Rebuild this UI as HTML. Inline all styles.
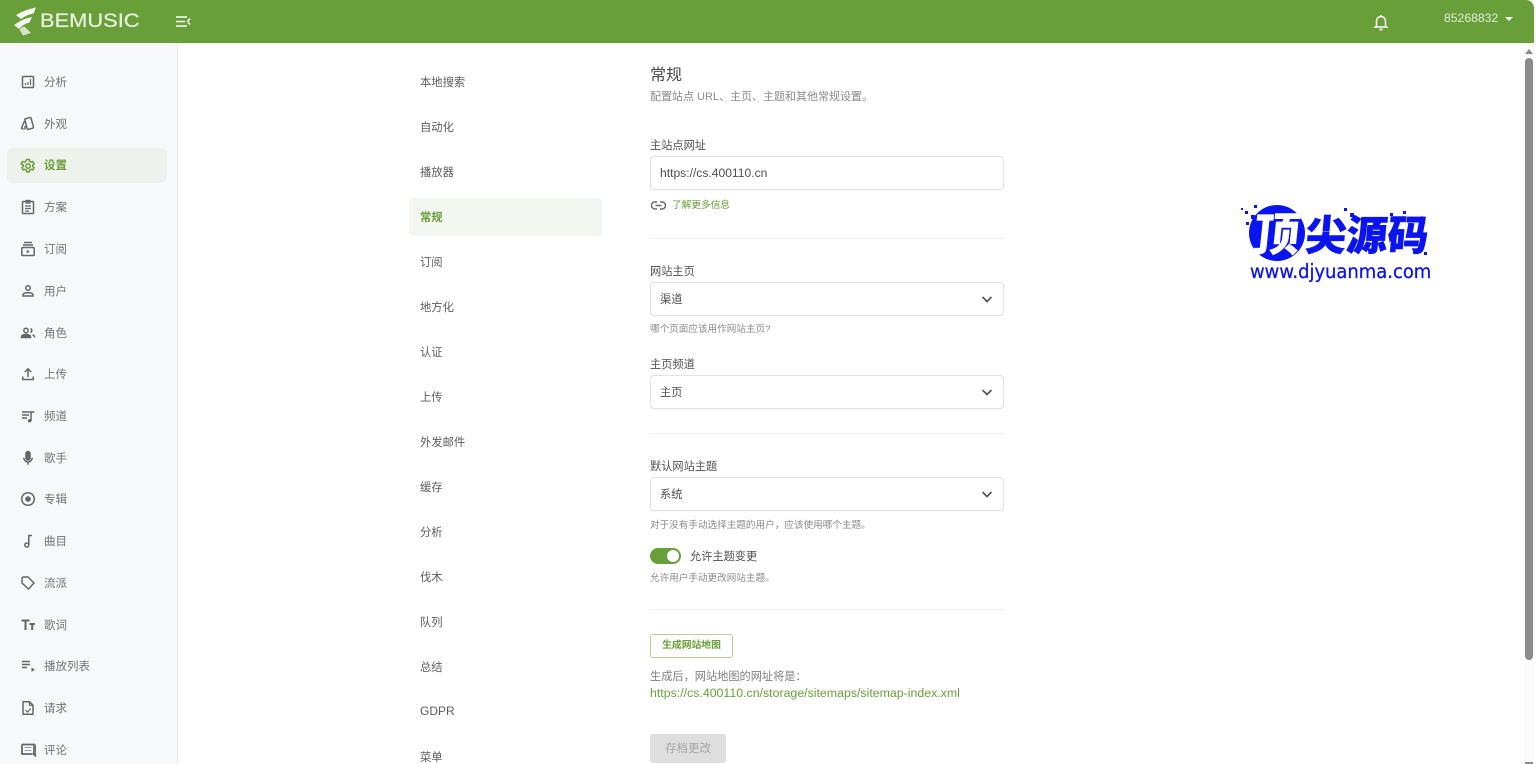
<!DOCTYPE html>
<html lang="zh-CN">
<head>
<meta charset="utf-8">
<title>常规设置</title>
<style>
html,body{margin:0;padding:0;width:1536px;height:764px;overflow:hidden;background:#fff;}
body{position:relative;font-family:"Liberation Sans","Noto Sans CJK SC",sans-serif;font-size:11.2px;color:#5f5f5f;filter:blur(.3px);}
.a{position:absolute;white-space:nowrap;}
#hd{position:absolute;left:0;top:0;width:1534px;height:43px;background:#689f38;border-top-right-radius:8px;}
#sb{position:absolute;left:0;top:43px;width:177px;height:721px;background:#f6f8fa;border-right:1px solid #e9ebed;}
.si{position:absolute;left:44px;line-height:16px;height:16px;color:#737373;font-size:11.5px;}
.ic{position:absolute;left:20px;width:16px;height:16px;fill:none;stroke:#666;stroke-width:1.5;}
.ni{position:absolute;left:420px;line-height:16px;height:16px;color:#5c5c5c;font-size:11.3px;}
.inp{position:absolute;left:650px;width:352px;height:32px;border:1px solid #e2e2e2;border-radius:4px;background:#fff;box-shadow:0 1px 1px rgba(0,0,0,.03);}
.inp span{position:absolute;left:9px;top:1px;line-height:32px;color:#4f4f4f;font-size:11.2px;}
.inp svg{position:absolute;left:329px;top:9px;width:14px;height:14px;fill:none;stroke:#555;stroke-width:1.7;}
.lb{position:absolute;left:650px;line-height:16px;color:#505050;font-size:11.2px;white-space:nowrap;}
.hp{position:absolute;left:650px;line-height:14px;color:#8a8a8a;font-size:9.6px;white-space:nowrap;}
.hr{position:absolute;left:650px;width:354px;height:1px;background:#f0f0f0;}
.sq{position:absolute;background:#0a14f0;}
</style>
</head>
<body>
<div id="hd">
  <svg class="a" style="left:0;top:0" width="40" height="43" viewBox="0 0 40 43">
    <path d="M16 15 Q24 10 36 7.500 L33.500 13.500 Q26 15 21 19 Z" fill="#f4f8f0"/>
    <path d="M14 25 Q22 19 32 17 L29.500 22.500 Q23 24 19 29 Z" fill="#f4f8f0"/>
    <path d="M19.500 29.500 Q23 25.500 25 27 L31 33 L23 35.500 Z" fill="#d5e5c6"/>
  </svg>
  <div class="a" style="left:40px;top:11px;font-size:19px;line-height:22px;color:#e8f1df;-webkit-text-stroke:.25px #e8f1df;transform-origin:left;transform:scaleX(1.15)">BEMUSIC</div>
  <svg class="a" style="left:175px;top:15px" width="16" height="13" viewBox="0 0 16 13" fill="none" stroke="#fff" stroke-width="1.4">
    <path d="M1 2H12M1 6.500H10M1 11H12M15 3.500L12.500 6.500L15 9.500"/>
  </svg>
  <svg class="a" style="left:1373px;top:13px" width="16" height="18" viewBox="0 0 16 18" fill="none" stroke="#fff" stroke-width="1.5">
    <path d="M3.500 13V8a4.500 4.500 0 0 1 9 0v5l1.200 1H2.300Z"/><path d="M6.500 16.500h3" stroke-width="1.800"/><path d="M8 2v1.500"/>
  </svg>
  <div class="a" style="left:1444px;top:10px;line-height:16px;font-size:12.2px;color:#e2eed8">85268832</div>
  <div class="a" style="left:1505px;top:17px;width:0;height:0;border-left:4px solid transparent;border-right:4px solid transparent;border-top:4px solid #f2f6ee"></div>
</div>

<div id="sb">
  <div class="a" style="left:7px;top:105px;width:160px;height:35px;background:#eef2ec;border-radius:5px"></div>
</div>

<svg class="ic" style="top:74px" viewBox="0 0 16 16"><rect x="2.500" y="2.500" width="11" height="11" rx="1"/><path d="M5.500 11V9M8 11V8M10.500 11V5" stroke-width="1.200"/></svg>
<div class="si" style="top:75px">分析</div>
<svg class="ic" style="top:116px" viewBox="0 0 16 16"><rect x="6" y="2" width="6.500" height="11" rx="1" transform="rotate(-15 9 8)"/><path d="M4.500 5L1.500 12L3.500 13.500M5 13.500V10"/></svg>
<div class="si" style="top:117px">外观</div>
<svg class="ic" style="top:158px;stroke:#689f38" viewBox="0 0 16 16"><circle cx="8" cy="8" r="2.200"/><path d="M6.700 1.500h2.600l.4 1.900 1.300.7 1.800-.6 1.300 2.200-1.400 1.300v1.400l1.400 1.300-1.300 2.200-1.800-.6-1.300.7-.4 1.900H6.700l-.4-1.900-1.300-.7-1.800.6-1.300-2.200 1.400-1.300V7.100L1.100 5.800 2.400 3.600l1.800.6 1.300-.7Z"/></svg>
<div class="si" style="top:158px;color:#689f38;font-weight:bold">设置</div>
<svg class="ic" style="top:199px" viewBox="0 0 16 16"><rect x="2.500" y="2.500" width="11" height="12" rx="1"/><path d="M6 1.500h4v2.500H6ZM5 7h6M5 9.500h6M5 12h4" stroke-width="1.200"/></svg>
<div class="si" style="top:200px">方案</div>
<svg class="ic" style="top:241px" viewBox="0 0 16 16"><path d="M4 1.500h8M3 4h10"/><rect x="1.800" y="6.500" width="12.400" height="8" rx="1"/><path d="M6.800 8.800v3.500l3-1.700Z" fill="#666" stroke="none"/></svg>
<div class="si" style="top:242px">订阅</div>
<svg class="ic" style="top:283px" viewBox="0 0 16 16"><circle cx="8" cy="5" r="2.300"/><path d="M3 13v-1c0-1.500 2.500-2.400 5-2.400s5 .9 5 2.400v1Z"/></svg>
<div class="si" style="top:284px">用户</div>
<svg class="ic" style="top:325px" viewBox="0 0 16 16"><circle cx="6" cy="5.500" r="2.200"/><path d="M1.500 12.500v-1c0-1.300 2.300-2 4.500-2s4.500.7 4.500 2v1Z" fill="#666"/><path d="M10.500 3.500a2.200 2.200 0 0 1 0 4M12.500 9.800c1.200.4 2 1 2 1.900v.8"/></svg>
<div class="si" style="top:326px">角色</div>
<svg class="ic" style="top:366px" viewBox="0 0 16 16"><path d="M8 11V3M4.800 6L8 2.800 11.200 6M2.800 10.500v3h10.400v-3"/></svg>
<div class="si" style="top:367px">上传</div>
<svg class="ic" style="top:408px" viewBox="0 0 16 16"><path d="M2 4h8.500M2 7h7M2 10h5M11 13V4h3.500" /><circle cx="9.500" cy="12.800" r="1.700" fill="#666" stroke="none"/></svg>
<div class="si" style="top:409px">频道</div>
<svg class="ic" style="top:450px" viewBox="0 0 16 16"><rect x="6" y="1.500" width="4" height="8.500" rx="2" fill="#666"/><path d="M3.800 7.800c0 2.500 1.900 4.200 4.200 4.200s4.200-1.700 4.200-4.200M8 12v2.800"/></svg>
<div class="si" style="top:451px">歌手</div>
<svg class="ic" style="top:491px" viewBox="0 0 16 16"><circle cx="8" cy="8" r="6.300"/><circle cx="8" cy="8" r="2.800" fill="#666" stroke="none"/></svg>
<div class="si" style="top:492px">专辑</div>
<svg class="ic" style="top:533px" viewBox="0 0 16 16"><path d="M8.800 12V2.500h3.200"/><circle cx="6.800" cy="12" r="2"/></svg>
<div class="si" style="top:534px">曲目</div>
<svg class="ic" style="top:575px" viewBox="0 0 16 16"><path d="M2 3.500A1.500 1.500 0 0 1 3.500 2H8l6 6-5.500 6L2 8Z"/></svg>
<div class="si" style="top:576px">流派</div>
<svg class="ic" style="top:617px" viewBox="0 0 16 16"><path d="M1.500 3.500h8M5.500 3.500V13M9.500 7h5.500M12.200 7v6" stroke-width="2"/></svg>
<div class="si" style="top:618px">歌词</div>
<svg class="ic" style="top:658px" viewBox="0 0 16 16"><path d="M2 3.500h8M2 6.500h8M2 9.500h5"/><path d="M11.500 9.500v4.500l3.300-2.200Z" fill="#666" stroke="none"/></svg>
<div class="si" style="top:659px">播放列表</div>
<svg class="ic" style="top:700px" viewBox="0 0 16 16"><path d="M3 1.800h6.500L13 5.300v8.900H3Z"/><path d="M9.500 1.800v3.500H13M5.500 10l2 2 3.200-3.500" stroke-width="1.200"/></svg>
<div class="si" style="top:701px">请求</div>
<svg class="ic" style="top:742px" viewBox="0 0 16 16"><path d="M2 2.500h12v9.500h-.5l2.500 2.300V2.500" stroke-width="1.800"/><path d="M2 2.500v9.500h10" stroke-width="1.800"/><path d="M4.500 5.500h7M4.500 8.500h7" stroke-width="1" stroke="#999"/></svg>
<div class="si" style="top:743px">评论</div>

<div class="a" style="left:409px;top:198px;width:193px;height:38px;background:#f4f7f1;border-radius:4px"></div>
<div class="ni" style="top:75px">本地搜索</div>
<div class="ni" style="top:120px">自动化</div>
<div class="ni" style="top:165px">播放器</div>
<div class="ni" style="top:210px;color:#689f38;font-weight:bold">常规</div>
<div class="ni" style="top:255px">订阅</div>
<div class="ni" style="top:300px">地方化</div>
<div class="ni" style="top:345px">认证</div>
<div class="ni" style="top:390px">上传</div>
<div class="ni" style="top:435px">外发邮件</div>
<div class="ni" style="top:480px">缓存</div>
<div class="ni" style="top:525px">分析</div>
<div class="ni" style="top:570px">伐木</div>
<div class="ni" style="top:615px">队列</div>
<div class="ni" style="top:660px">总结</div>
<div class="ni" style="top:703px;font-size:12px">GDPR</div>
<div class="ni" style="top:750px">菜单</div>

<div class="a" style="left:650px;top:65px;font-size:16px;line-height:22px;color:#4a4a4a">常规</div>
<div class="a" style="left:650px;top:90px;font-size:11px;line-height:15px;color:#8a8a8a">配置站点 URL、主页、主题和其他常规设置。</div>

<div class="lb" style="top:138px">主站点网址</div>
<div class="inp" style="top:156px"><span style="font-size:12.1px;top:0">https://cs.400110.cn</span></div>
<svg class="a" style="left:651px;top:199px" width="15" height="13" viewBox="0 0 15 13" fill="none" stroke="#666" stroke-width="1.400"><path d="M6 3H4a3.500 3.500 0 0 0 0 7h2M9 3h2a3.500 3.500 0 0 1 0 7H9M4.500 6.500h6"/></svg>
<div class="a" style="left:672px;top:199px;font-size:9.7px;line-height:14px;color:#689f38">了解更多信息</div>
<div class="hr" style="top:238px"></div>

<div class="lb" style="top:264px">网站主页</div>
<div class="inp" style="top:282px"><span>渠道</span><svg viewBox="0 0 14 14"><path d="M2.500 5L7 9.500 11.500 5"/></svg></div>
<div class="hp" style="top:323px">哪个页面应该用作网站主页?</div>
<div class="lb" style="top:357px">主页频道</div>
<div class="inp" style="top:375px"><span>主页</span><svg viewBox="0 0 14 14"><path d="M2.500 5L7 9.500 11.500 5"/></svg></div>
<div class="hr" style="top:433px"></div>

<div class="lb" style="top:459px">默认网站主题</div>
<div class="inp" style="top:477px"><span>系统</span><svg viewBox="0 0 14 14"><path d="M2.500 5L7 9.500 11.500 5"/></svg></div>
<div class="hp" style="top:519px">对于没有手动选择主题的用户，应该使用哪个主题。</div>
<div class="a" style="left:650px;top:548px;width:31px;height:16px;border-radius:8px;background:#689f38"></div>
<div class="a" style="left:667px;top:550px;width:12px;height:12px;border-radius:50%;background:#fff"></div>
<div class="a" style="left:690px;top:549px;line-height:16px;color:#505050;font-size:11.2px">允许主题变更</div>
<div class="hp" style="top:572px">允许用户手动更改网站主题。</div>
<div class="hr" style="top:609px"></div>

<div class="a" style="left:650px;top:634px;width:81px;height:22px;border:1px solid #b5d09d;border-radius:3px;text-align:center;line-height:22px;color:#689f38;font-weight:bold;font-size:9.8px">生成网站地图</div>
<div class="a" style="left:650px;top:669px;line-height:16px;font-size:11.2px;color:#808080">生成后，网站地图的网址将是：</div>
<div class="a" style="left:650px;top:685px;line-height:16px;font-size:12.35px;color:#689f38">https://cs.400110.cn/storage/sitemaps/sitemap-index.xml</div>
<div class="a" style="left:650px;top:734px;width:76px;height:29px;background:#dedede;border-radius:3px;text-align:center;line-height:30px;color:#a5a5a5;font-size:11.5px">存档更改</div>

<div class="a" style="left:1249px;top:205px;width:56px;height:56px;border-radius:50%;background:#0a14f0"></div>
<div class="a" style="left:1249px;top:205px;width:56px;height:56px;text-align:center;line-height:54px;font-size:46px;font-weight:900;color:#fff;font-family:'Noto Sans CJK SC',sans-serif;transform:skewX(-6deg)">顶</div>
<div class="a" style="left:1306px;top:204px;width:126px;line-height:56px;font-size:41px;font-weight:900;color:#0a14f0;-webkit-text-stroke:.6px #0a14f0;font-family:'Noto Sans CJK SC',sans-serif;transform:skewX(-5deg)">尖源码</div>
<div class="a" style="left:1250px;top:261px;line-height:22px;font-size:19.5px;color:#0a14f0;-webkit-text-stroke:.3px #0a14f0;font-family:'DejaVu Sans',sans-serif;transform-origin:left;transform:scaleX(.92)">www.djyuanma.com</div>
<i class="sq" style="left:1241px;top:208px;width:2px;height:2px"></i>
<i class="sq" style="left:1245px;top:211px;width:3px;height:3px"></i>
<i class="sq" style="left:1251px;top:215px;width:4px;height:4px"></i>
<i class="sq" style="left:1254px;top:205px;width:3px;height:3px"></i>
<i class="sq" style="left:1246px;top:222px;width:3px;height:3px"></i>
<i class="sq" style="left:1344px;top:208px;width:3px;height:3px"></i>
<i class="sq" style="left:1350px;top:213px;width:4px;height:4px"></i>
<i class="sq" style="left:1390px;top:213px;width:3px;height:3px"></i>
<i class="sq" style="left:1403px;top:211px;width:3px;height:3px"></i>
<i class="sq" style="left:1424px;top:252px;width:3px;height:3px"></i>

<div class="a" style="left:1524px;top:43px;width:10px;height:721px;background:#fbfbfb"></div>
<div class="a" style="left:1525px;top:49px;width:0;height:0;border-left:4px solid transparent;border-right:4px solid transparent;border-bottom:5px solid #8b8b8b"></div>
<div class="a" style="left:1525px;top:58px;width:8px;height:602px;border-radius:4px;background:#8b8b8b"></div>
<div class="a" style="left:1525px;top:762px;width:8px;height:2px;background:#8b8b8b"></div>
</body>
</html>
